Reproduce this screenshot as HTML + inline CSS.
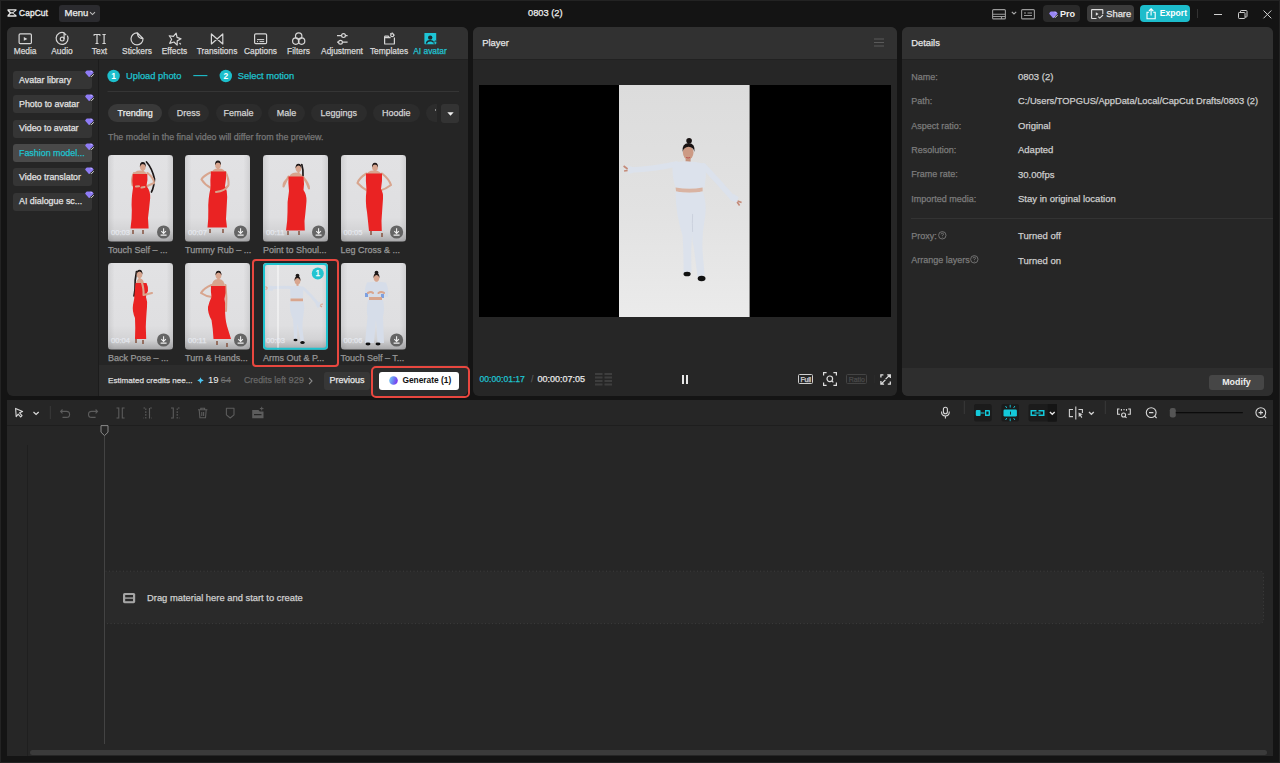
<!DOCTYPE html>
<html><head><meta charset="utf-8">
<style>
*{box-sizing:border-box;margin:0;padding:0}
html,body{width:1280px;height:763px;overflow:hidden;background:#141414;font-family:"Liberation Sans",sans-serif;color:#ddd}
.a{position:absolute}
.t{position:absolute;white-space:nowrap;line-height:1;-webkit-text-stroke:0.25px currentColor}
svg{position:absolute;overflow:visible}
</style></head><body>
<!-- window border -->
<div class="a" style="left:0;top:0;width:1280px;height:1px;background:#232323"></div>
<div class="a" style="left:0;top:0;width:1px;height:763px;background:#232323"></div>
<div class="a" style="left:1279px;top:0;width:1px;height:763px;background:#232323"></div>
<div class="a" style="left:0;top:762px;width:1280px;height:1px;background:#232323"></div>

<!-- ===== TITLE BAR ===== -->
<div id="titlebar">
  <svg style="left:7px;top:9px" width="10" height="8" viewBox="0 0 10 8">
    <path d="M0.5 0.3 H9.5 L9.5 1.6 L6.2 3.9 L9.5 6.3 V7.7 H0.5 V6.2 L2.6 4 L0.5 1.8 Z M2.3 1.6 L3.9 3.3 H5.6 L8 1.6 Z M3.9 4.6 L2.3 6.3 H8 L5.6 4.6 Z" fill="#e8e8e8" fill-rule="evenodd"/>
  </svg>
  <div class="t" style="left:19px;top:8.7px;font-size:8.3px;color:#e8e8e8;letter-spacing:0.15px;-webkit-text-stroke:0.35px currentColor">CapCut</div>
  <div class="a" style="left:59px;top:5px;width:41px;height:17px;background:#2b2b2f;border-radius:3px"></div>
  <div class="t" style="left:64.5px;top:7.8px;font-size:9.5px;color:#eee">Menu</div>
  <svg style="left:89px;top:11px" width="7" height="5" viewBox="0 0 7 5"><path d="M1 1.2 L3.5 3.6 L6 1.2" stroke="#bbb" stroke-width="1.1" fill="none"/></svg>
  <div class="t" style="left:528px;top:8.5px;font-size:9.3px;color:#f0f0f0">0803 (2)</div>

  <!-- layout icons -->
  <svg style="left:992px;top:8.5px" width="14" height="10.5" viewBox="0 0 14 10.5">
    <rect x="0.6" y="0.6" width="12.8" height="9.3" rx="1" stroke="#9a9a9a" stroke-width="1.1" fill="none"/>
    <path d="M0.6 5.2 H13.4 M0.6 7.5 H13.4 M9.5 7.5 V9.9" stroke="#9a9a9a" stroke-width="1.1" fill="none"/>
  </svg>
  <svg style="left:1010.5px;top:10.5px" width="6" height="4" viewBox="0 0 6 4"><path d="M0.8 0.8 L3 3 L5.2 0.8" stroke="#aaa" stroke-width="1.1" fill="none"/></svg>
  <svg style="left:1021px;top:8.5px" width="14" height="10.5" viewBox="0 0 14 10.5">
    <rect x="0.6" y="0.6" width="12.8" height="9.3" rx="1" stroke="#9a9a9a" stroke-width="1.1" fill="none"/>
    <path d="M3 4 H5 M6.5 4 H11 M3 6.5 H11" stroke="#9a9a9a" stroke-width="1.1" fill="none"/>
  </svg>
  <!-- Pro -->
  <div class="a" style="left:1042.5px;top:5px;width:37.5px;height:17px;background:#2a2a2a;border-radius:4px"></div>
  <svg style="left:1049.2px;top:10.5px" width="9" height="7.5" viewBox="0 0 9 7.5">
    <path d="M2 0.4 H6.6 Q7.2 0.4 7.6 0.9 L8.5 2.2 Q8.8 2.7 8.4 3.1 L4.8 6.9 Q4.3 7.3 3.9 6.9 L0.4 3.1 Q0 2.7 0.3 2.2 L1.1 0.9 Q1.5 0.4 2 0.4 Z" fill="#9a87f6"/>
    <path d="M5.6 1.2 Q6.6 1.3 7 2" stroke="#cfc6ff" stroke-width="0.8" fill="none"/>
    <path d="M5.2 5.4 L6.3 6.5 L8.6 4.2" stroke="#e0e0e0" stroke-width="0.9" fill="none"/>
  </svg>
  <div class="t" style="left:1060px;top:9.6px;font-size:9.1px;font-weight:bold;color:#f2f2f2;-webkit-text-stroke:0">Pro</div>
  <!-- Share -->
  <div class="a" style="left:1086.5px;top:5px;width:47px;height:17px;background:#3b3b3b;border-radius:4px"></div>
  <svg style="left:1091px;top:8.5px" width="13" height="10.5" viewBox="0 0 13 10.5">
    <path d="M11.8 5 V1 Q11.8 0.6 11.4 0.6 H1 Q0.6 0.6 0.6 1 V9 Q0.6 9.5 1 9.5 H5.5" stroke="#e0e0e0" stroke-width="1.1" fill="none"/>
    <path d="M4.8 3.2 L7.6 5 L4.8 6.8 Z" fill="#e0e0e0"/>
    <path d="M7.3 7.6 L8.8 9.1 L12 6" stroke="#e0e0e0" stroke-width="1.1" fill="none"/>
  </svg>
  <div class="t" style="left:1106.2px;top:8.6px;font-size:9.4px;color:#e8e8e8">Share</div>
  <!-- Export -->
  <div class="a" style="left:1140px;top:5.3px;width:50px;height:16.7px;background:#1cbccb;border-radius:4px"></div>
  <svg style="left:1145.5px;top:7.8px" width="10" height="11.5" viewBox="0 0 10 11.5">
    <path d="M3 4.2 H1 V10.8 H9.2 V4.2 H7.2" stroke="#fff" stroke-width="1.1" fill="none"/>
    <path d="M5.1 7.5 V0.8 M2.9 3 L5.1 0.8 L7.3 3" stroke="#fff" stroke-width="1.1" fill="none"/>
  </svg>
  <div class="t" style="left:1159.8px;top:8.9px;font-size:8.6px;font-weight:bold;color:#fff;-webkit-text-stroke:0">Export</div>
  <div class="a" style="left:1196.5px;top:9px;width:1px;height:9px;background:#333"></div>
  <!-- window controls -->
  <div class="a" style="left:1214px;top:13.5px;width:8px;height:1px;background:#d0d0d0"></div>
  <svg style="left:1238px;top:9.5px" width="10" height="9" viewBox="0 0 10 9">
    <rect x="0.5" y="2.5" width="6.5" height="6" rx="0.8" stroke="#d0d0d0" stroke-width="1" fill="none"/>
    <path d="M2.5 2.5 V1.2 Q2.5 0.5 3.2 0.5 H8.3 Q9 0.5 9 1.2 V6.3 Q9 7 8.3 7 H7" stroke="#d0d0d0" stroke-width="1" fill="none"/>
  </svg>
  <svg style="left:1263px;top:9.8px" width="9" height="9" viewBox="0 0 9 9"><path d="M0.5 0.5 L8.3 8.3 M8.3 0.5 L0.5 8.3" stroke="#d0d0d0" stroke-width="1" fill="none"/></svg>
</div>

<!-- ===== LEFT PANEL ===== -->
<div class="a" id="lp" style="left:7px;top:27px;width:461px;height:369px;background:#252525;border-radius:6px;overflow:hidden">
  <div class="a" style="left:0;top:0;width:461px;height:32px;background:#313131"></div>
  <div class="a" style="left:0;top:32px;width:461px;height:1px;background:#212121"></div>
  <div class="a" style="left:91px;top:32px;width:1px;height:337px;background:#1c1c1c"></div>
  <div class="a" style="left:92px;top:338.4px;width:369px;height:31px;background:#2c2c2c"></div>
</div>


<!-- ===== LEFT PANEL TABS ===== -->
<svg style="left:0;top:0" width="470" height="60" viewBox="0 0 470 60">
 <g stroke="#d6d6d6" stroke-width="1.2" fill="none">
  <!-- media -->
  <rect x="19.1" y="33.9" width="12.3" height="9.8" rx="1.2"/>
  <path d="M23.8 37 L27.4 38.9 L23.8 40.8 Z" fill="#d6d6d6" stroke="none"/>
  <!-- audio -->
  <path d="M64.4 32.9 A6 6 0 1 0 67.4 35.6"/>
  <circle cx="62.2" cy="39.1" r="1.9"/>
  <path d="M64.1 39 V33.3 Q65.6 34 66.2 35.3"/>
  <!-- stickers -->
  <path d="M137.4 32.9 A6 6 0 1 0 143 38.6 Z M137.4 33 Q137.6 38.4 143 38.6"/>
  <!-- effects -->
  <path d="M174.7 33 L176.6 36.9 L180.8 37.3 L177.6 40.2 L178.6 44.3 L174.7 42.1 L170.9 44.4 L171.8 40 L168.6 37.2 L172.8 36.7 Z" stroke-linejoin="round" transform="rotate(14 174.7 39)"/>
  <path d="M179.5 43 L180.8 44.4"/>
  <!-- transitions -->
  <path d="M211.4 34 V44 L222.8 34 V44 Z" stroke-linejoin="round"/>
  <!-- captions -->
  <rect x="254.6" y="33.8" width="12" height="9.8" rx="1.2"/>
  <path d="M257 39.6 H264.2 M257 41.6 H258 M259.5 41.6 H264.2" stroke-width="1"/>
  <!-- filters -->
  <circle cx="298.7" cy="36.1" r="3.2"/>
  <circle cx="295.8" cy="41.1" r="3.2"/>
  <circle cx="301.6" cy="41.1" r="3.2"/>
  <!-- adjustment -->
  <path d="M337 35.6 H341.6 M345.4 35.6 H347.6 M337 42.2 H338.6 M342.4 42.2 H347.6"/>
  <circle cx="343.5" cy="35.6" r="1.9"/>
  <circle cx="340.5" cy="42.2" r="1.9"/>
  <!-- templates -->
  <path d="M384.6 36.2 V43.4 Q384.6 44 385.2 44 H393.8 Q394.4 44 394.4 43.4 V37.6 M384.6 36.2 H388.2 L389.4 37.6 H390.6 M384.6 37.6 H390.4"/>
  <circle cx="392.2" cy="35.2" r="1.5"/>
  <path d="M392.2 32.6 V33.4 M394.6 35.2 H393.9 M390.3 33.5 L390.9 34"/>
 </g>
 <!-- text TI -->
 <g fill="#d6d6d6">
  <path d="M93.6 34 H100.4 V36.1 H99.6 L99.4 35.1 H97.6 V43.1 L98.6 43.3 V44 H95.4 V43.3 L96.4 43.1 V35.1 H94.6 L94.4 36.1 H93.6 Z"/>
  <path d="M102.3 34 H105.9 V34.7 L104.7 34.9 V43.1 L105.9 43.3 V44 H102.3 V43.3 L103.5 43.1 V34.9 L102.3 34.7 Z"/>
 </g>
 <!-- ai avatar -->
 <rect x="424.4" y="33" width="11.8" height="11.2" rx="0.6" fill="#1ec5d6"/>
 <circle cx="430.2" cy="37.6" r="2.2" fill="#1b2b2e"/>
 <path d="M426.4 43.6 Q426.8 40.8 430.2 40.8 Q432.6 40.8 433.4 42" fill="none" stroke="#1b2b2e" stroke-width="1.4"/>
 <path d="M435.4 40.6 Q435.8 42.5 437.6 42.9 Q435.8 43.3 435.4 45.2 Q435 43.3 433.2 42.9 Q435 42.5 435.4 40.6 Z" fill="#1ec5d6" stroke="#2e2e2e" stroke-width="0.7"/>
</svg>
<div class="t" style="left:-4.899999999999999px;top:47px;width:60px;text-align:center;font-size:8.4px;color:#d8d8d8">Media</div>
<div class="t" style="left:32px;top:47px;width:60px;text-align:center;font-size:8.4px;color:#d8d8d8">Audio</div>
<div class="t" style="left:69.5px;top:47px;width:60px;text-align:center;font-size:8.4px;color:#d8d8d8">Text</div>
<div class="t" style="left:107px;top:47px;width:60px;text-align:center;font-size:8.4px;color:#d8d8d8">Stickers</div>
<div class="t" style="left:144.5px;top:47px;width:60px;text-align:center;font-size:8.4px;color:#d8d8d8">Effects</div>
<div class="t" style="left:187px;top:47px;width:60px;text-align:center;font-size:8.4px;color:#d8d8d8">Transitions</div>
<div class="t" style="left:230.5px;top:47px;width:60px;text-align:center;font-size:8.4px;color:#d8d8d8">Captions</div>
<div class="t" style="left:268.5px;top:47px;width:60px;text-align:center;font-size:8.4px;color:#d8d8d8">Filters</div>
<div class="t" style="left:312px;top:47px;width:60px;text-align:center;font-size:8.4px;color:#d8d8d8">Adjustment</div>
<div class="t" style="left:359px;top:47px;width:60px;text-align:center;font-size:8.4px;color:#d8d8d8">Templates</div>
<div class="t" style="left:400px;top:47px;width:60px;text-align:center;font-size:8.4px;color:#22c3d2">AI avatar</div>


<!-- ===== LEFT PANEL BODY ===== -->
<div class="a" style="left:13px;top:71.0px;width:79px;height:18px;background:#353535;border-radius:3px"></div>
<div class="t" style="left:19px;top:75.6px;font-size:8.9px;color:#e2e2e2">Avatar library</div>
<svg style="left:85px;top:69.8px" width="10" height="8" viewBox="0 0 10 8"><path d="M2 0.4 H6.6 Q7.2 0.4 7.6 0.9 L8.5 2.2 Q8.8 2.7 8.4 3.1 L4.8 6.9 Q4.3 7.3 3.9 6.9 L0.4 3.1 Q0 2.7 0.3 2.2 L1.1 0.9 Q1.5 0.4 2 0.4 Z" fill="#8f7cf6"/><path d="M5.6 1.2 Q6.6 1.3 7 2" stroke="#d4ccff" stroke-width="0.9" fill="none"/><path d="M5.3 5.6 L6.4 6.7 L8.8 4.3" stroke="#2a2a2a" stroke-width="2" fill="none"/><path d="M5.3 5.6 L6.4 6.7 L8.8 4.3" stroke="#e6e6e6" stroke-width="0.9" fill="none"/></svg>
<div class="a" style="left:13px;top:95.3px;width:79px;height:18px;background:#353535;border-radius:3px"></div>
<div class="t" style="left:19px;top:99.9px;font-size:8.9px;color:#e2e2e2">Photo to avatar</div>
<svg style="left:85px;top:94.1px" width="10" height="8" viewBox="0 0 10 8"><path d="M2 0.4 H6.6 Q7.2 0.4 7.6 0.9 L8.5 2.2 Q8.8 2.7 8.4 3.1 L4.8 6.9 Q4.3 7.3 3.9 6.9 L0.4 3.1 Q0 2.7 0.3 2.2 L1.1 0.9 Q1.5 0.4 2 0.4 Z" fill="#8f7cf6"/><path d="M5.6 1.2 Q6.6 1.3 7 2" stroke="#d4ccff" stroke-width="0.9" fill="none"/><path d="M5.3 5.6 L6.4 6.7 L8.8 4.3" stroke="#2a2a2a" stroke-width="2" fill="none"/><path d="M5.3 5.6 L6.4 6.7 L8.8 4.3" stroke="#e6e6e6" stroke-width="0.9" fill="none"/></svg>
<div class="a" style="left:13px;top:119.6px;width:79px;height:18px;background:#353535;border-radius:3px"></div>
<div class="t" style="left:19px;top:124.2px;font-size:8.9px;color:#e2e2e2">Video to avatar</div>
<svg style="left:85px;top:118.4px" width="10" height="8" viewBox="0 0 10 8"><path d="M2 0.4 H6.6 Q7.2 0.4 7.6 0.9 L8.5 2.2 Q8.8 2.7 8.4 3.1 L4.8 6.9 Q4.3 7.3 3.9 6.9 L0.4 3.1 Q0 2.7 0.3 2.2 L1.1 0.9 Q1.5 0.4 2 0.4 Z" fill="#8f7cf6"/><path d="M5.6 1.2 Q6.6 1.3 7 2" stroke="#d4ccff" stroke-width="0.9" fill="none"/><path d="M5.3 5.6 L6.4 6.7 L8.8 4.3" stroke="#2a2a2a" stroke-width="2" fill="none"/><path d="M5.3 5.6 L6.4 6.7 L8.8 4.3" stroke="#e6e6e6" stroke-width="0.9" fill="none"/></svg>
<div class="a" style="left:13px;top:143.9px;width:79px;height:18px;background:#494949;border-radius:3px"></div>
<div class="t" style="left:19px;top:148.5px;font-size:8.9px;color:#1ec3cf">Fashion model...</div>
<svg style="left:85px;top:142.7px" width="10" height="8" viewBox="0 0 10 8"><path d="M2 0.4 H6.6 Q7.2 0.4 7.6 0.9 L8.5 2.2 Q8.8 2.7 8.4 3.1 L4.8 6.9 Q4.3 7.3 3.9 6.9 L0.4 3.1 Q0 2.7 0.3 2.2 L1.1 0.9 Q1.5 0.4 2 0.4 Z" fill="#8f7cf6"/><path d="M5.6 1.2 Q6.6 1.3 7 2" stroke="#d4ccff" stroke-width="0.9" fill="none"/><path d="M5.3 5.6 L6.4 6.7 L8.8 4.3" stroke="#2a2a2a" stroke-width="2" fill="none"/><path d="M5.3 5.6 L6.4 6.7 L8.8 4.3" stroke="#e6e6e6" stroke-width="0.9" fill="none"/></svg>
<div class="a" style="left:13px;top:168.2px;width:79px;height:18px;background:#353535;border-radius:3px"></div>
<div class="t" style="left:19px;top:172.8px;font-size:8.9px;color:#e2e2e2">Video translator</div>
<svg style="left:85px;top:167.0px" width="10" height="8" viewBox="0 0 10 8"><path d="M2 0.4 H6.6 Q7.2 0.4 7.6 0.9 L8.5 2.2 Q8.8 2.7 8.4 3.1 L4.8 6.9 Q4.3 7.3 3.9 6.9 L0.4 3.1 Q0 2.7 0.3 2.2 L1.1 0.9 Q1.5 0.4 2 0.4 Z" fill="#8f7cf6"/><path d="M5.6 1.2 Q6.6 1.3 7 2" stroke="#d4ccff" stroke-width="0.9" fill="none"/><path d="M5.3 5.6 L6.4 6.7 L8.8 4.3" stroke="#2a2a2a" stroke-width="2" fill="none"/><path d="M5.3 5.6 L6.4 6.7 L8.8 4.3" stroke="#e6e6e6" stroke-width="0.9" fill="none"/></svg>
<div class="a" style="left:13px;top:192.5px;width:79px;height:18px;background:#353535;border-radius:3px"></div>
<div class="t" style="left:19px;top:197.1px;font-size:8.9px;color:#e2e2e2">AI dialogue sc...</div>
<svg style="left:85px;top:191.3px" width="10" height="8" viewBox="0 0 10 8"><path d="M2 0.4 H6.6 Q7.2 0.4 7.6 0.9 L8.5 2.2 Q8.8 2.7 8.4 3.1 L4.8 6.9 Q4.3 7.3 3.9 6.9 L0.4 3.1 Q0 2.7 0.3 2.2 L1.1 0.9 Q1.5 0.4 2 0.4 Z" fill="#8f7cf6"/><path d="M5.6 1.2 Q6.6 1.3 7 2" stroke="#d4ccff" stroke-width="0.9" fill="none"/><path d="M5.3 5.6 L6.4 6.7 L8.8 4.3" stroke="#2a2a2a" stroke-width="2" fill="none"/><path d="M5.3 5.6 L6.4 6.7 L8.8 4.3" stroke="#e6e6e6" stroke-width="0.9" fill="none"/></svg>

<svg style="left:0;top:0" width="470" height="100" viewBox="0 0 470 100">
 <circle cx="113.6" cy="76" r="6.2" fill="#1dbfcc"/>
 <circle cx="225.8" cy="76" r="6.2" fill="#1dbfcc"/>
 <path d="M193.3 75.6 H207.4" stroke="#1dbfcc" stroke-width="1.1"/>
 <path d="M107.5 91.5 H459" stroke="#353535" stroke-width="1"/>
</svg>
<div class="t" style="left:109.6px;top:71.8px;width:8px;text-align:center;font-size:8.5px;font-weight:bold;color:#fff;-webkit-text-stroke:0">1</div>
<div class="t" style="left:221.8px;top:71.8px;width:8px;text-align:center;font-size:8.5px;font-weight:bold;color:#fff;-webkit-text-stroke:0">2</div>
<div class="t" style="left:126px;top:71.5px;font-size:9.3px;color:#1ec3cf">Upload photo</div>
<div class="t" style="left:237.8px;top:71.5px;font-size:9.3px;color:#1ec3cf">Select motion</div>
<div class="a" style="left:108.2px;top:104.2px;width:54px;height:18.3px;background:#393939;border-radius:9px"></div>
<div class="t" style="left:108.2px;top:108.8px;width:54px;text-align:center;font-size:9px;color:#ececec">Trending</div>
<div class="a" style="left:168px;top:104.2px;width:41px;height:18.3px;background:#2c2c2c;border-radius:9px"></div>
<div class="t" style="left:168px;top:108.8px;width:41px;text-align:center;font-size:9px;color:#d4d4d4">Dress</div>
<div class="a" style="left:215.5px;top:104.2px;width:46px;height:18.3px;background:#2c2c2c;border-radius:9px"></div>
<div class="t" style="left:215.5px;top:108.8px;width:46px;text-align:center;font-size:9px;color:#d4d4d4">Female</div>
<div class="a" style="left:268px;top:104.2px;width:37px;height:18.3px;background:#2c2c2c;border-radius:9px"></div>
<div class="t" style="left:268px;top:108.8px;width:37px;text-align:center;font-size:9px;color:#d4d4d4">Male</div>
<div class="a" style="left:311px;top:104.2px;width:55.5px;height:18.3px;background:#2c2c2c;border-radius:9px"></div>
<div class="t" style="left:311px;top:108.8px;width:55.5px;text-align:center;font-size:9px;color:#d4d4d4">Leggings</div>
<div class="a" style="left:372.8px;top:104.2px;width:47px;height:18.3px;background:#2c2c2c;border-radius:9px"></div>
<div class="t" style="left:372.8px;top:108.8px;width:47px;text-align:center;font-size:9px;color:#d4d4d4">Hoodie</div>
<div class="a" style="left:426px;top:104.2px;width:11px;height:18.3px;background:#2c2c2c;border-radius:9px 0 0 9px"></div>
<div class="a" style="left:434.5px;top:109px;width:1px;height:2px;background:#888"></div>
<div class="a" style="left:440.8px;top:104px;width:18.4px;height:18.5px;background:#333;border-radius:3px"></div>
<svg style="left:446.5px;top:111.5px" width="7" height="4" viewBox="0 0 7 4"><path d="M0.3 0.3 H6.7 L3.5 3.7 Z" fill="#f0f0f0"/></svg>
<div class="t" style="left:108px;top:132.5px;font-size:8.9px;color:#777">The model in the final video will differ from the preview.</div>

<!--THUMBS-->
<svg style="left:108px;top:155.3px" width="65" height="86.7" viewBox="0 0 65 86.7"><defs><linearGradient id="g0" x1="0" y1="0" x2="0" y2="1">
<stop offset="0" stop-color="#e2e2e4"/><stop offset="0.72" stop-color="#dfdfe1"/><stop offset="0.88" stop-color="#d3d3d5"/><stop offset="1" stop-color="#a8a8aa"/></linearGradient>
<linearGradient id="g0h" x1="0" y1="0" x2="1" y2="0"><stop offset="0" stop-color="#000" stop-opacity="0.08"/><stop offset="0.1" stop-color="#000" stop-opacity="0"/><stop offset="0.9" stop-color="#000" stop-opacity="0"/><stop offset="1" stop-color="#000" stop-opacity="0.08"/></linearGradient>
<clipPath id="g0c"><rect x="0" y="0" width="65" height="86.7" rx="3.5"/></clipPath></defs><g clip-path="url(#g0c)"><rect width="65" height="86.7" fill="url(#g0)"/><rect width="65" height="86.7" fill="url(#g0h)"/><path d="M38.5 7 Q44 13 46.5 24 Q46 32 43.5 37" stroke="#1d1818" stroke-width="1.7" fill="none" stroke-linecap="round"/><rect x="33.8" y="13.9" width="2" height="3.5" fill="#d8a58e"/><ellipse cx="34.8" cy="11.4" rx="2.9" ry="3.9" fill="#d8a58e"/><path d="M31.9 11.9 Q31.599999999999998 7.1000000000000005 34.8 7.1000000000000005 Q38.0 7.1000000000000005 37.699999999999996 11.9 Q37.099999999999994 9.2 34.8 9.0 Q32.5 9.2 31.9 11.9 Z" fill="#1d1818"/><path d="M26 18 Q23 24 24.5 30 L28 31.5" stroke="#d8a58e" stroke-width="2.1" fill="none" stroke-linecap="round" stroke-linejoin="round"/><path d="M39.5 18 Q46 23 46 28 L37 32" stroke="#d8a58e" stroke-width="2.1" fill="none" stroke-linecap="round" stroke-linejoin="round"/><path d="M25 75 L25 79 M35 75 L35 79" stroke="#8a5a48" stroke-width="1.6"/><path d="M25.5 21 Q25.5 15.5 32.25 15.5 Q39 15.5 39 21 Z" fill="#d8a58e"/><path d="M24.8 19 H39.3 Q40 25 38.5 31 Q42.5 36 42.2 43 Q41 55 40 63 L40.6 73.5 H22.5 Q24 63 23.8 55 Q23 45 25 33 Q23.8 26 24.8 19 Z" fill="#ea2323"/><path d="M28 31.5 L31 31.3" stroke="#d8a58e" stroke-width="2.1" fill="none" stroke-linecap="round" stroke-linejoin="round"/><path d="M36.5 32 L33.5 32.5" stroke="#d8a58e" stroke-width="2.1" fill="none" stroke-linecap="round" stroke-linejoin="round"/><circle cx="55.6" cy="77" r="6.6" fill="#5b5b5b" fill-opacity="0.92"/><path d="M55.6 73.2 V78.4 M53.3 76.2 L55.6 78.5 L57.9 76.2 M52.6 80.1 H58.6" stroke="#f0f0f0" stroke-width="1.1" fill="none"/></g></svg>
<div class="t" style="left:111px;top:228.8px;font-size:7.6px;color:#eef2fa;opacity:0.7">00:03</div>
<div class="t" style="left:108px;top:246.3px;font-size:9px;color:#969696">Touch Self – ...</div>
<svg style="left:185px;top:155.3px" width="65" height="86.7" viewBox="0 0 65 86.7"><defs><linearGradient id="g1" x1="0" y1="0" x2="0" y2="1">
<stop offset="0" stop-color="#e2e2e4"/><stop offset="0.72" stop-color="#dfdfe1"/><stop offset="0.88" stop-color="#d3d3d5"/><stop offset="1" stop-color="#a8a8aa"/></linearGradient>
<linearGradient id="g1h" x1="0" y1="0" x2="1" y2="0"><stop offset="0" stop-color="#000" stop-opacity="0.08"/><stop offset="0.1" stop-color="#000" stop-opacity="0"/><stop offset="0.9" stop-color="#000" stop-opacity="0"/><stop offset="1" stop-color="#000" stop-opacity="0.08"/></linearGradient>
<clipPath id="g1c"><rect x="0" y="0" width="65" height="86.7" rx="3.5"/></clipPath></defs><g clip-path="url(#g1c)"><rect width="65" height="86.7" fill="url(#g1)"/><rect width="65" height="86.7" fill="url(#g1h)"/><rect x="32" y="12.3" width="2" height="3.5" fill="#d8a58e"/><ellipse cx="33" cy="9.8" rx="2.9" ry="3.9" fill="#d8a58e"/><path d="M30.1 10.3 Q29.8 5.500000000000001 33 5.500000000000001 Q36.2 5.500000000000001 35.9 10.3 Q35.3 7.6000000000000005 33 7.4 Q30.7 7.6000000000000005 30.1 10.3 Z" fill="#1d1818"/><path d="M26.5 17 Q18 21 16.5 24.5 Q20 30 26 33" stroke="#d8a58e" stroke-width="2.1" fill="none" stroke-linecap="round" stroke-linejoin="round"/><path d="M40.5 17 Q44 24 43.5 30 Q40 36 31 37" stroke="#d8a58e" stroke-width="2.1" fill="none" stroke-linecap="round" stroke-linejoin="round"/><path d="M25 74 L25 78 M38 74 L38 78" stroke="#8a5a48" stroke-width="1.6"/><path d="M26.5 19 Q26.5 13.5 33.5 13.5 Q40.5 13.5 40.5 19 Z" fill="#d8a58e"/><path d="M26 16.5 H41 Q41.5 24 40 31 Q42.5 36 42.2 42 Q41.5 56 41 64 L42 72.5 H22.5 Q23.5 64 23.3 55 Q22.8 45 25.5 33 Q25 25 26 16.5 Z" fill="#ea2323"/><path d="M43 31 Q40 36 31 37" stroke="#d8a58e" stroke-width="2.0" fill="none" stroke-linecap="round" stroke-linejoin="round"/><circle cx="55.6" cy="77" r="6.6" fill="#5b5b5b" fill-opacity="0.92"/><path d="M55.6 73.2 V78.4 M53.3 76.2 L55.6 78.5 L57.9 76.2 M52.6 80.1 H58.6" stroke="#f0f0f0" stroke-width="1.1" fill="none"/></g></svg>
<div class="t" style="left:188px;top:228.8px;font-size:7.6px;color:#eef2fa;opacity:0.7">00:07</div>
<div class="t" style="left:185px;top:246.3px;font-size:9px;color:#969696">Tummy Rub – ...</div>
<svg style="left:263px;top:155.3px" width="65" height="86.7" viewBox="0 0 65 86.7"><defs><linearGradient id="g2" x1="0" y1="0" x2="0" y2="1">
<stop offset="0" stop-color="#e2e2e4"/><stop offset="0.72" stop-color="#dfdfe1"/><stop offset="0.88" stop-color="#d3d3d5"/><stop offset="1" stop-color="#a8a8aa"/></linearGradient>
<linearGradient id="g2h" x1="0" y1="0" x2="1" y2="0"><stop offset="0" stop-color="#000" stop-opacity="0.08"/><stop offset="0.1" stop-color="#000" stop-opacity="0"/><stop offset="0.9" stop-color="#000" stop-opacity="0"/><stop offset="1" stop-color="#000" stop-opacity="0.08"/></linearGradient>
<clipPath id="g2c"><rect x="0" y="0" width="65" height="86.7" rx="3.5"/></clipPath></defs><g clip-path="url(#g2c)"><rect width="65" height="86.7" fill="url(#g2)"/><rect width="65" height="86.7" fill="url(#g2h)"/><path d="M38.8 9.5 Q40.5 15 40 21" stroke="#1d1818" stroke-width="1.7" fill="none" stroke-linecap="round"/><rect x="34.5" y="15.5" width="2" height="3.5" fill="#d8a58e"/><ellipse cx="35.5" cy="13" rx="2.9" ry="3.9" fill="#d8a58e"/><path d="M32.6 13.5 Q32.3 8.7 35.5 8.7 Q38.7 8.7 38.4 13.5 Q37.8 10.8 35.5 10.6 Q33.2 10.8 32.6 13.5 Z" fill="#1d1818"/><path d="M26.5 22 Q20 27 20.5 31.5 Q23 26 25.5 21.5" stroke="#d8a58e" stroke-width="2.1" fill="none" stroke-linecap="round" stroke-linejoin="round"/><path d="M40 22 Q46 29 46 33.5 Q44 27 40.5 22.5" stroke="#d8a58e" stroke-width="2.1" fill="none" stroke-linecap="round" stroke-linejoin="round"/><path d="M25 76 L25 80 M36 76 L36 80" stroke="#8a5a48" stroke-width="1.6"/><path d="M26 24 Q26 17.5 33.0 17.5 Q40 17.5 40 24 Z" fill="#d8a58e"/><path d="M25.5 21.5 H40.5 Q41.5 29 40.5 35 Q43.8 40 43.5 46 Q42.5 58 41.5 66 L41.8 75.5 H23 Q24.5 66 24.5 57 Q24 47 26 36 Q25 28 25.5 21.5 Z" fill="#ea2323"/><circle cx="55.6" cy="77" r="6.6" fill="#5b5b5b" fill-opacity="0.92"/><path d="M55.6 73.2 V78.4 M53.3 76.2 L55.6 78.5 L57.9 76.2 M52.6 80.1 H58.6" stroke="#f0f0f0" stroke-width="1.1" fill="none"/></g></svg>
<div class="t" style="left:266px;top:228.8px;font-size:7.6px;color:#eef2fa;opacity:0.7">00:11</div>
<div class="t" style="left:263px;top:246.3px;font-size:9px;color:#969696">Point to Shoul...</div>
<svg style="left:340.5px;top:155.3px" width="65" height="86.7" viewBox="0 0 65 86.7"><defs><linearGradient id="g3" x1="0" y1="0" x2="0" y2="1">
<stop offset="0" stop-color="#e2e2e4"/><stop offset="0.72" stop-color="#dfdfe1"/><stop offset="0.88" stop-color="#d3d3d5"/><stop offset="1" stop-color="#a8a8aa"/></linearGradient>
<linearGradient id="g3h" x1="0" y1="0" x2="1" y2="0"><stop offset="0" stop-color="#000" stop-opacity="0.08"/><stop offset="0.1" stop-color="#000" stop-opacity="0"/><stop offset="0.9" stop-color="#000" stop-opacity="0"/><stop offset="1" stop-color="#000" stop-opacity="0.08"/></linearGradient>
<clipPath id="g3c"><rect x="0" y="0" width="65" height="86.7" rx="3.5"/></clipPath></defs><g clip-path="url(#g3c)"><rect width="65" height="86.7" fill="url(#g3)"/><rect width="65" height="86.7" fill="url(#g3h)"/><rect x="33" y="14.5" width="2" height="3.5" fill="#d8a58e"/><ellipse cx="34" cy="12" rx="2.9" ry="3.9" fill="#d8a58e"/><path d="M31.1 12.5 Q30.8 7.7 34 7.7 Q37.2 7.7 36.9 12.5 Q36.3 9.8 34 9.6 Q31.7 9.8 31.1 12.5 Z" fill="#1d1818"/><path d="M25.5 18.5 Q18 23 16.5 28 Q21 33 27 36" stroke="#d8a58e" stroke-width="2.1" fill="none" stroke-linecap="round" stroke-linejoin="round"/><path d="M41 18.5 Q48 24 50 30 Q45 34 38 36" stroke="#d8a58e" stroke-width="2.1" fill="none" stroke-linecap="round" stroke-linejoin="round"/><path d="M30 76 L30 80 M41 78 L41 82" stroke="#8a5a48" stroke-width="1.6"/><path d="M25.5 21 Q25.5 15.5 33.0 15.5 Q40.5 15.5 40.5 21 Z" fill="#d8a58e"/><path d="M25 18.5 H41 Q41.5 26 40 34 Q42.5 38 42 44 Q41 58 40.5 66 L40.8 76 H28 Q27 66 26 57 Q24 47 25.5 35 Q24.5 26 25 18.5 Z" fill="#ea2323"/><circle cx="55.6" cy="77" r="6.6" fill="#5b5b5b" fill-opacity="0.92"/><path d="M55.6 73.2 V78.4 M53.3 76.2 L55.6 78.5 L57.9 76.2 M52.6 80.1 H58.6" stroke="#f0f0f0" stroke-width="1.1" fill="none"/></g></svg>
<div class="t" style="left:343.5px;top:228.8px;font-size:7.6px;color:#eef2fa;opacity:0.7">00:05</div>
<div class="t" style="left:340.5px;top:246.3px;font-size:9px;color:#969696">Leg Cross &amp; ...</div>
<svg style="left:108px;top:263.3px" width="65" height="86.7" viewBox="0 0 65 86.7"><defs><linearGradient id="g4" x1="0" y1="0" x2="0" y2="1">
<stop offset="0" stop-color="#e2e2e4"/><stop offset="0.72" stop-color="#dfdfe1"/><stop offset="0.88" stop-color="#d3d3d5"/><stop offset="1" stop-color="#a8a8aa"/></linearGradient>
<linearGradient id="g4h" x1="0" y1="0" x2="1" y2="0"><stop offset="0" stop-color="#000" stop-opacity="0.08"/><stop offset="0.1" stop-color="#000" stop-opacity="0"/><stop offset="0.9" stop-color="#000" stop-opacity="0"/><stop offset="1" stop-color="#000" stop-opacity="0.08"/></linearGradient>
<clipPath id="g4c"><rect x="0" y="0" width="65" height="86.7" rx="3.5"/></clipPath></defs><g clip-path="url(#g4c)"><rect width="65" height="86.7" fill="url(#g4)"/><rect width="65" height="86.7" fill="url(#g4h)"/><path d="M28.5 8.5 Q26.5 18 27 26 Q26.5 30 26 33" stroke="#1d1818" stroke-width="1.7" fill="none" stroke-linecap="round"/><rect x="30.5" y="13.5" width="2" height="3.5" fill="#d8a58e"/><ellipse cx="31.5" cy="11" rx="2.9" ry="3.9" fill="#d8a58e"/><path d="M28.6 11.5 Q28.3 6.7 31.5 6.7 Q34.7 6.7 34.4 11.5 Q33.8 8.8 31.5 8.6 Q29.2 8.8 28.6 11.5 Z" fill="#1d1818"/><path d="M28 76 L28 80 M35 77 L35 81" stroke="#8a5a48" stroke-width="1.6"/><path d="M28 22 Q28 15.5 32.0 15.5 Q36 15.5 36 22 Z" fill="#d8a58e"/><path d="M27.5 20 H38.5 Q40.5 24 40 28 Q38 31 38 34 Q39.5 38 39 44 Q38 56 37.8 64 L38.2 76 H27 Q27.5 64 27 55 Q24 48 25 42 Q26.5 36 26.5 31 Q27 25 27.5 20 Z" fill="#ea2323"/><path d="M33.5 18 Q36 26 35.5 32 Q40 31 44 30" stroke="#d8a58e" stroke-width="2.1" fill="none" stroke-linecap="round" stroke-linejoin="round"/><circle cx="55.6" cy="77" r="6.6" fill="#5b5b5b" fill-opacity="0.92"/><path d="M55.6 73.2 V78.4 M53.3 76.2 L55.6 78.5 L57.9 76.2 M52.6 80.1 H58.6" stroke="#f0f0f0" stroke-width="1.1" fill="none"/></g></svg>
<div class="t" style="left:111px;top:336.8px;font-size:7.6px;color:#eef2fa;opacity:0.7">00:04</div>
<div class="t" style="left:108px;top:354.3px;font-size:9px;color:#969696">Back Pose – ...</div>
<svg style="left:185px;top:263.3px" width="65" height="86.7" viewBox="0 0 65 86.7"><defs><linearGradient id="g5" x1="0" y1="0" x2="0" y2="1">
<stop offset="0" stop-color="#e2e2e4"/><stop offset="0.72" stop-color="#dfdfe1"/><stop offset="0.88" stop-color="#d3d3d5"/><stop offset="1" stop-color="#a8a8aa"/></linearGradient>
<linearGradient id="g5h" x1="0" y1="0" x2="1" y2="0"><stop offset="0" stop-color="#000" stop-opacity="0.08"/><stop offset="0.1" stop-color="#000" stop-opacity="0"/><stop offset="0.9" stop-color="#000" stop-opacity="0"/><stop offset="1" stop-color="#000" stop-opacity="0.08"/></linearGradient>
<clipPath id="g5c"><rect x="0" y="0" width="65" height="86.7" rx="3.5"/></clipPath></defs><g clip-path="url(#g5c)"><rect width="65" height="86.7" fill="url(#g5)"/><rect width="65" height="86.7" fill="url(#g5h)"/><rect x="32.5" y="14.5" width="2" height="3.5" fill="#d8a58e"/><ellipse cx="33.5" cy="12" rx="2.9" ry="3.9" fill="#d8a58e"/><path d="M30.6 12.5 Q30.3 7.7 33.5 7.7 Q36.7 7.7 36.4 12.5 Q35.8 9.8 33.5 9.6 Q31.2 9.8 30.6 12.5 Z" fill="#1d1818"/><path d="M26.5 22 Q19 25 16 30 Q21 33.5 27 34" stroke="#d8a58e" stroke-width="2.1" fill="none" stroke-linecap="round" stroke-linejoin="round"/><path d="M40.5 22 Q42 35 41 48" stroke="#d8a58e" stroke-width="2.1" fill="none" stroke-linecap="round" stroke-linejoin="round"/><path d="M32 78 L32 82 M42 80 L42 84" stroke="#8a5a48" stroke-width="1.6"/><path d="M26.5 25 Q26.5 16 33.25 16 Q40 16 40 25 Z" fill="#d8a58e"/><path d="M26 23 H40.5 Q41 30 39.5 36 Q40.5 40 40 45 Q40 56 42 63 L46 76 H28.5 Q28 66 26.5 57 Q22.5 50 23 44 Q24.5 38 26.5 34 Q25.5 28 26 23 Z" fill="#ea2323"/><circle cx="55.6" cy="77" r="6.6" fill="#5b5b5b" fill-opacity="0.92"/><path d="M55.6 73.2 V78.4 M53.3 76.2 L55.6 78.5 L57.9 76.2 M52.6 80.1 H58.6" stroke="#f0f0f0" stroke-width="1.1" fill="none"/></g></svg>
<div class="t" style="left:188px;top:336.8px;font-size:7.6px;color:#eef2fa;opacity:0.7">00:11</div>
<div class="t" style="left:185px;top:354.3px;font-size:9px;color:#969696">Turn &amp; Hands...</div>
<svg style="left:263px;top:263.3px" width="65" height="86.7" viewBox="0 0 65 86.7"><defs><linearGradient id="g6" x1="0" y1="0" x2="0" y2="1">
<stop offset="0" stop-color="#e2e2e4"/><stop offset="0.72" stop-color="#dfdfe1"/><stop offset="0.88" stop-color="#d3d3d5"/><stop offset="1" stop-color="#a8a8aa"/></linearGradient>
<linearGradient id="g6h" x1="0" y1="0" x2="1" y2="0"><stop offset="0" stop-color="#000" stop-opacity="0.08"/><stop offset="0.1" stop-color="#000" stop-opacity="0"/><stop offset="0.9" stop-color="#000" stop-opacity="0"/><stop offset="1" stop-color="#000" stop-opacity="0.08"/></linearGradient>
<clipPath id="g6c"><rect x="0" y="0" width="65" height="86.7" rx="3.5"/></clipPath></defs><g clip-path="url(#g6c)"><rect width="65" height="86.7" fill="url(#g6)"/><rect width="65" height="86.7" fill="url(#g6h)"/><path d="M28 24.5 Q18 24 6 25" stroke="#d6dde9" stroke-width="3.0" fill="none" stroke-linecap="round" stroke-linejoin="round"/><path d="M5 22.5 L10 23 L10 27.5 L5 28 Z" fill="#d6dde9"/><path d="M40 25 Q49 33 55 41" stroke="#d6dde9" stroke-width="3.0" fill="none" stroke-linecap="round" stroke-linejoin="round"/><path d="M52.5 41.5 L57 38.5 L58 43.5 L54.5 45 Z" fill="#d6dde9"/><path d="M4.5 25 L2.5 23.5 M4.5 25.5 L2.5 26.5" stroke="#d8a58e" stroke-width="1.2"/><path d="M57.5 41.5 L60 41 M57 42.5 L59 44" stroke="#d8a58e" stroke-width="1.2"/><rect x="33.5" y="20.0" width="2" height="3.5" fill="#d8a58e"/><ellipse cx="34.5" cy="17.5" rx="2.9" ry="3.9" fill="#d8a58e"/><path d="M31.6 18.0 Q31.3 13.2 34.5 13.2 Q37.7 13.2 37.4 18.0 Q36.8 15.3 34.5 15.1 Q32.2 15.3 31.6 18.0 Z" fill="#1d1818"/><circle cx="34.5" cy="12.7" r="1.9" fill="#1d1818"/><path d="M27 23.5 Q34 22 40.5 24 L40 35.5 H27.5 Z" fill="#d6dde9"/><path d="M27.5 35.5 H40 V38.5 H27.5 Z" fill="#d8a58e"/><path d="M27 38.5 H40.5 Q42 45 40.5 52 Q39 60 39.5 66 L41 78 H37.5 L34.5 60 L34 76 H31 Q30.5 62 30 56 Q26 48 27 38.5 Z" fill="#d6dde9"/><ellipse cx="32.5" cy="77" rx="2" ry="1.3" fill="#111"/><ellipse cx="39.5" cy="79.5" rx="2.2" ry="1.5" fill="#111"/><path d="M15 0 V86.7" stroke="#ffffff" stroke-opacity="0.8" stroke-width="1.1"/></g><rect x="1" y="1" width="63" height="84.7" rx="3" stroke="#1ec3cf" stroke-width="2" fill="none"/><circle cx="54.8" cy="10.6" r="6" fill="#23c4d0"/></svg>
<div class="t" style="left:312.8px;top:269.90000000000003px;width:10px;text-align:center;font-size:8.2px;color:#fff">1</div>
<div class="t" style="left:266px;top:336.8px;font-size:7.6px;color:#eef2fa;opacity:0.7">00:03</div>
<div class="t" style="left:263px;top:354.3px;font-size:9px;color:#969696">Arms Out &amp; P...</div>
<svg style="left:340.5px;top:263.3px" width="65" height="86.7" viewBox="0 0 65 86.7"><defs><linearGradient id="g7" x1="0" y1="0" x2="0" y2="1">
<stop offset="0" stop-color="#e2e2e4"/><stop offset="0.72" stop-color="#dfdfe1"/><stop offset="0.88" stop-color="#d3d3d5"/><stop offset="1" stop-color="#a8a8aa"/></linearGradient>
<linearGradient id="g7h" x1="0" y1="0" x2="1" y2="0"><stop offset="0" stop-color="#000" stop-opacity="0.08"/><stop offset="0.1" stop-color="#000" stop-opacity="0"/><stop offset="0.9" stop-color="#000" stop-opacity="0"/><stop offset="1" stop-color="#000" stop-opacity="0.08"/></linearGradient>
<clipPath id="g7c"><rect x="0" y="0" width="65" height="86.7" rx="3.5"/></clipPath></defs><g clip-path="url(#g7c)"><rect width="65" height="86.7" fill="url(#g7)"/><rect width="65" height="86.7" fill="url(#g7h)"/><rect x="34.5" y="17.0" width="2" height="3.5" fill="#d8a58e"/><ellipse cx="35.5" cy="14.5" rx="2.9" ry="3.9" fill="#d8a58e"/><path d="M32.6 15.0 Q32.3 10.2 35.5 10.2 Q38.7 10.2 38.4 15.0 Q37.8 12.3 35.5 12.1 Q33.2 12.3 32.6 15.0 Z" fill="#1d1818"/><circle cx="35.5" cy="9.7" r="1.9" fill="#1d1818"/><path d="M26 19.5 Q35 18 45 19.5 Q48 26 47 34 L42 34 L41 26 H30 L29 34 L24 34 Q23 26 26 19.5 Z" fill="#d6dde9"/><path d="M28 26 H42 V34 H28 Z" fill="#d6dde9"/><rect x="24" y="30" width="3" height="4" fill="#7da0e0"/><rect x="40" y="31" width="3" height="4" fill="#7da0e0"/><path d="M27 30 Q30 28 32 30" stroke="#d8a58e" stroke-width="2.1" fill="none" stroke-linecap="round" stroke-linejoin="round"/><path d="M43 30 Q40 28 37.5 30" stroke="#d8a58e" stroke-width="2.1" fill="none" stroke-linecap="round" stroke-linejoin="round"/><path d="M28 34 H41 V37 H28 Z" fill="#d8a58e"/><path d="M27 37 H42 Q44 46 42 54 L43 80 H36.5 L35 56 L33 80 H24 L26.5 54 Q25 46 27 37 Z" fill="#d6dde9"/><ellipse cx="27" cy="81" rx="2.5" ry="1.4" fill="#111"/><ellipse cx="37" cy="81" rx="2.5" ry="1.4" fill="#111"/><circle cx="55.6" cy="77" r="6.6" fill="#5b5b5b" fill-opacity="0.92"/><path d="M55.6 73.2 V78.4 M53.3 76.2 L55.6 78.5 L57.9 76.2 M52.6 80.1 H58.6" stroke="#f0f0f0" stroke-width="1.1" fill="none"/></g></svg>
<div class="t" style="left:343.5px;top:336.8px;font-size:7.6px;color:#eef2fa;opacity:0.7">00:06</div>
<div class="t" style="left:340.5px;top:354.3px;font-size:9px;color:#969696">Touch Self – T...</div>
<!--/THUMBS-->

<!-- selection boxes -->
<div class="a" style="left:252px;top:258.6px;width:87px;height:108.4px;border:2px solid #e8473f;border-radius:4px"></div>
<!-- credits bar -->
<div class="t" style="left:108px;top:376.8px;font-size:8.1px;color:#dcdcdc">Estimated credits nee...</div>
<svg style="left:197px;top:377px" width="7" height="7" viewBox="0 0 9 9"><path d="M4.5 0.3 Q5 3.8 8.7 4.5 Q5 5.2 4.5 8.7 Q4 5.2 0.3 4.5 Q4 3.8 4.5 0.3 Z" fill="#4cc3f0"/></svg>
<div class="t" style="left:208px;top:374.8px;font-size:9.6px;color:#f0f0f0;-webkit-text-stroke:0">19</div>
<div class="t" style="left:220.5px;top:374.8px;font-size:9.6px;color:#707070;-webkit-text-stroke:0">64</div>
<div class="a" style="left:220.5px;top:379.5px;width:10.5px;height:1px;background:#707070"></div>
<div class="t" style="left:244px;top:376.3px;font-size:8.8px;color:#686868">Credits left <span style="font-size:9.3px">929</span></div>
<svg style="left:307.5px;top:376.5px" width="5" height="8" viewBox="0 0 5 8"><path d="M1 0.8 L4 4 L1 7.2" stroke="#8a8a8a" stroke-width="1.1" fill="none"/></svg>
<div class="a" style="left:324px;top:372px;width:46px;height:18px;background:#373737;border-radius:3px"></div>
<div class="t" style="left:324px;top:376.2px;width:46px;text-align:center;font-size:9px;color:#e8e8e8">Previous</div>
<div class="a" style="left:371px;top:365.6px;width:99.3px;height:32px;border:2px solid #e8473f;border-radius:5px"></div>
<div class="a" style="left:379.3px;top:371.5px;width:79.7px;height:18.5px;background:#fff;border-radius:3px"></div>
<svg style="left:388.5px;top:376px" width="9" height="9" viewBox="0 0 9 9"><defs><linearGradient id="gdot" x1="0" y1="0" x2="1" y2="0.3"><stop offset="0" stop-color="#7fd6f2"/><stop offset="0.5" stop-color="#6a8cf2"/><stop offset="1" stop-color="#7a3cf0"/></linearGradient></defs><circle cx="4.5" cy="4.5" r="4.3" fill="url(#gdot)"/></svg>
<div class="t" style="left:402.4px;top:376px;font-size:8.4px;font-weight:bold;color:#111;-webkit-text-stroke:0">Generate (1)</div>

<!-- ===== PLAYER PANEL ===== -->
<div class="a" id="pp" style="left:473px;top:27px;width:424px;height:369px;background:#262626;border-radius:6px;overflow:hidden">
  <div class="a" style="left:0;top:0;width:424px;height:32px;background:#313131"></div>
  <div class="a" style="left:0;top:32px;width:424px;height:1px;background:#212121"></div>
  <div class="t" style="left:9.2px;top:11px;font-size:9.4px;color:#e6e6e6">Player</div>
  <div class="a" style="left:6px;top:58px;width:412px;height:232px;background:#000"></div>
</div>


<!-- ===== PLAYER CONTENT ===== -->
<svg style="left:619.4px;top:85px" width="130.6" height="232" viewBox="0 0 130.6 232">
 <defs>
  <linearGradient id="vbg" x1="0" y1="0" x2="0" y2="1"><stop offset="0" stop-color="#dcdcdc"/><stop offset="0.55" stop-color="#e2e2e2"/><stop offset="1" stop-color="#ebebeb"/></linearGradient>
 </defs>
 <rect width="130.6" height="232" fill="url(#vbg)"/>
 <g transform="translate(-619.4,-85)">
  <!-- arms -->
  <path d="M677 164 Q655 169 631 170" stroke="#dce2ec" stroke-width="5.5" fill="none" stroke-linecap="round"/>
  <path d="M633 167 L628 165.5 L628.5 174 L633 173 Z" fill="#dce2ec"/>
  <path d="M704 166 Q720 183 733 198" stroke="#dce2ec" stroke-width="5.5" fill="none" stroke-linecap="round"/>
  <path d="M730 199 L737 203 L739 197 L734 194 Z" fill="#dce2ec"/>
  <path d="M628 169 L624 166 M628 170.5 L624.5 171" stroke="#c48a78" stroke-width="1.6"/>
  <path d="M738 201 L742 202.5 M737.5 202 L740 205.5" stroke="#c48a78" stroke-width="1.6"/>
  <!-- neck/head -->
  <rect x="686" y="157" width="5" height="6" fill="#c4927c"/>
  <ellipse cx="688.6" cy="152.5" rx="5.3" ry="7" fill="#cc9a84"/>
  <path d="M683 152 Q682 143.5 689 143 Q696 143.5 694.8 152 Q694 147 689 146.8 Q684 147 683 152 Z" fill="#1a1414"/>
  <circle cx="689.5" cy="140.8" r="2.8" fill="#1a1414"/>
  <path d="M686.5 157.5 Q688.5 158.5 690.5 157.5" stroke="#b5484a" stroke-width="0.9" fill="none"/>
  <!-- top -->
  <path d="M673 163 Q688 159 706 164 Q707 176 705 187.5 Q690 190 676 187.5 Q672 176 673 163 Z" fill="#dce2ec"/>
  <path d="M676 187.5 Q690 190 703 187.5 L703 191.5 Q690 194 676.5 191.5 Z" fill="#d9b3a2"/>
  <!-- pants -->
  <path d="M676 191.5 Q690 194 703 191.5 Q708 204 705 220 Q702 236 703 252 L705 275 L698 277 L694 246 Q692 240 693 232 Q691 246 692 272 L684 273 Q684 252 683 236 Q676 214 676 191.5 Z" fill="#dce2ec"/>
  <path d="M693 214 Q692.5 224 693 232" stroke="#c6cdd9" stroke-width="0.8" fill="none"/>
  <ellipse cx="687.5" cy="274" rx="3.6" ry="2.3" fill="#111"/>
  <ellipse cx="702" cy="278.5" rx="3.9" ry="2.7" fill="#111"/>
 </g>
</svg>
<div class="t" style="left:479.5px;top:374.8px;font-size:8.6px;color:#1ec3cf">00:00:01:17</div>
<div class="t" style="left:531px;top:374.8px;font-size:8.6px;color:#555">/</div>
<div class="t" style="left:537.5px;top:374.8px;font-size:9px;color:#e6e6e6">00:00:07:05</div>
<svg style="left:595px;top:372.5px" width="18" height="13" viewBox="0 0 18 13">
 <g fill="#3e3e3e"><rect x="0" y="0" width="7.5" height="2"/><rect x="0" y="3.5" width="7.5" height="2"/><rect x="0" y="7" width="7.5" height="2"/><rect x="0" y="10.5" width="7.5" height="2"/>
 <rect x="9.5" y="0" width="7.5" height="2"/><rect x="9.5" y="3.5" width="7.5" height="2"/><rect x="9.5" y="7" width="7.5" height="2"/><rect x="9.5" y="10.5" width="7.5" height="2"/></g>
</svg>
<div class="a" style="left:681.6px;top:375px;width:2px;height:8.5px;background:#e6e6e6"></div>
<div class="a" style="left:686.4px;top:375px;width:2px;height:8.5px;background:#e6e6e6"></div>
<div class="a" style="left:798px;top:374px;width:15.3px;height:10px;border:1px solid #cfcfcf;border-radius:1.5px"></div>
<div class="t" style="left:798px;top:375.6px;width:15.3px;text-align:center;font-size:7px;color:#d8d8d8;letter-spacing:-0.2px">Full</div>
<svg style="left:822.8px;top:372.3px" width="14" height="14" viewBox="0 0 14 14">
 <path d="M0.6 3.6 V0.6 H3.6 M10.4 0.6 H13.4 V3.6 M13.4 10.4 V13.4 H10.4 M3.6 13.4 H0.6 V10.4" stroke="#dedede" stroke-width="1.2" fill="none"/>
 <circle cx="6.8" cy="6.8" r="2.8" stroke="#dedede" stroke-width="1.2" fill="none"/><path d="M8.8 8.8 L10.4 10.4" stroke="#dedede" stroke-width="1.2"/>
</svg>
<div class="a" style="left:846.3px;top:374px;width:21px;height:10px;border:1px solid #444;border-radius:1.5px"></div>
<div class="t" style="left:846.3px;top:375.6px;width:21px;text-align:center;font-size:7px;color:#4a4a4a">Ratio</div>
<div class="a" style="left:873.5px;top:375px;width:1px;height:8px;background:#2a2a2a"></div>
<svg style="left:879px;top:373px" width="13" height="13" viewBox="879 373 13 13">
 <path d="M880.9 377.4 V374.8 H883.4 M890.3 381.6 V384.2 H887.8 M885.6 379.1 L890 374.9 M887.2 374.8 H890.3 V377.9 M885.4 379.9 L881.1 384.1 M880.9 381 V384.2 H884.1" stroke="#e0e0e0" stroke-width="1.3" fill="none"/>
</svg>
<svg style="left:874px;top:38px" width="10" height="9" viewBox="0 0 10 9"><path d="M0 1 H10 M0 4.5 H10 M0 8 H10" stroke="#5a5a5a" stroke-width="1.1"/></svg>

<!-- ===== DETAILS PANEL ===== -->
<div class="a" id="dp" style="left:902px;top:27px;width:371px;height:369px;background:#262626;border-radius:6px;overflow:hidden">
  <div class="a" style="left:0;top:0;width:371px;height:32px;background:#313131"></div>
  <div class="a" style="left:0;top:32px;width:371px;height:1px;background:#212121"></div>
  <div class="t" style="left:9.2px;top:11px;font-size:9.4px;color:#e6e6e6">Details</div>
  <div class="a" style="left:0;top:341px;width:371px;height:28px;background:#2e2e2e"></div>
</div>


<!-- ===== DETAILS CONTENT ===== -->
<div class="t" style="left:911.2px;top:72.6px;font-size:9px;color:#7c7c7c">Name:</div>
<div class="t" style="left:1018px;top:72.1px;font-size:9.5px;color:#cdcdcd">0803 (2)</div>
<div class="t" style="left:911.2px;top:97.4px;font-size:9px;color:#7c7c7c">Path:</div>
<div class="t" style="left:1018px;top:96.9px;font-size:9.3px;color:#cdcdcd">C:/Users/TOPGUS/AppData/Local/CapCut Drafts/0803 (2)</div>
<div class="t" style="left:911.2px;top:121.6px;font-size:9px;color:#7c7c7c">Aspect ratio:</div>
<div class="t" style="left:1018px;top:121.1px;font-size:9.5px;color:#cdcdcd">Original</div>
<div class="t" style="left:911.2px;top:145.8px;font-size:9px;color:#7c7c7c">Resolution:</div>
<div class="t" style="left:1018px;top:145.3px;font-size:9.5px;color:#cdcdcd">Adapted</div>
<div class="t" style="left:911.2px;top:170.3px;font-size:9px;color:#7c7c7c">Frame rate:</div>
<div class="t" style="left:1018px;top:169.8px;font-size:9.5px;color:#cdcdcd">30.00fps</div>
<div class="t" style="left:911.2px;top:194.8px;font-size:9px;color:#7c7c7c">Imported media:</div>
<div class="t" style="left:1018px;top:194.3px;font-size:9.5px;color:#cdcdcd">Stay in original location</div>
<div class="t" style="left:911.2px;top:231.7px;font-size:9px;color:#7c7c7c">Proxy:</div>
<div class="t" style="left:1018px;top:231.2px;font-size:9.5px;color:#cdcdcd">Turned off</div>
<div class="t" style="left:911.2px;top:256.3px;font-size:9px;color:#7c7c7c">Arrange layers</div>
<div class="t" style="left:1018px;top:255.8px;font-size:9.5px;color:#cdcdcd">Turned on</div>
<div class="a" style="left:911px;top:217.5px;width:362px;height:1px;background:#333"></div>
<svg style="left:938px;top:230.8px" width="9" height="9" viewBox="0 0 9 9"><circle cx="4.3" cy="4.3" r="3.7" stroke="#777" stroke-width="0.9" fill="none"/><path d="M3.1 3.4 Q3.1 2.2 4.3 2.2 Q5.5 2.2 5.5 3.3 Q5.5 4 4.4 4.5 V5.2 M4.4 6.2 V6.7" stroke="#777" stroke-width="0.9" fill="none"/></svg>
<svg style="left:970px;top:255.4px" width="9" height="9" viewBox="0 0 9 9"><circle cx="4.3" cy="4.3" r="3.7" stroke="#777" stroke-width="0.9" fill="none"/><path d="M3.1 3.4 Q3.1 2.2 4.3 2.2 Q5.5 2.2 5.5 3.3 Q5.5 4 4.4 4.5 V5.2 M4.4 6.2 V6.7" stroke="#777" stroke-width="0.9" fill="none"/></svg>
<div class="a" style="left:1209px;top:374.8px;width:55px;height:15.2px;background:#464646;border-radius:3px"></div>
<div class="t" style="left:1209px;top:378.2px;width:55px;text-align:center;font-size:8.9px;font-weight:bold;color:#eee;-webkit-text-stroke:0">Modify</div>

<!-- ===== TIMELINE ===== -->
<div class="a" id="tl" style="left:7px;top:400px;width:1266px;height:356px;background:#262626">
  <div class="a" style="left:0;top:25px;width:1266px;height:1px;background:#1e1e1e"></div>
</div>

<!-- ===== TIMELINE CONTENT ===== -->
<svg style="left:0;top:398px" width="1280" height="40" viewBox="0 398 1280 40">
 <g stroke="#d8d8d8" stroke-width="1.1" fill="none">
  <!-- cursor -->
  <path d="M15.6 408.4 L22.6 411.6 L19.6 412.8 L22 415.6 L20.6 417 L18.2 414.2 L16.2 416.6 Z" stroke-linejoin="round"/>
  <path d="M33.5 412 L36.1 414.4 L38.7 412" stroke-width="1.3"/>
 </g>
 <path d="M50.3 406 V419" stroke="#3a3a3a" stroke-width="1"/>
 <g stroke="#5c5c5c" stroke-width="1.1" fill="none">
  <!-- undo -->
  <path d="M62.5 409.5 L60.6 411.4 L62.5 413.3 M60.8 411.4 H66.5 Q69.6 411.4 69.6 414.4 Q69.6 417.4 66.5 417.4 H62.5"/>
  <!-- redo -->
  <path d="M95.6 409.5 L97.5 411.4 L95.6 413.3 M97.3 411.4 H91.6 Q88.5 411.4 88.5 414.4 Q88.5 417.4 91.6 417.4 H95.6"/>
  <!-- split -->
  <path d="M116.5 408 H118.8 V418 H116.5 M124.6 408 H122.3 V418 H124.6"/>
  <!-- split left -->
  <path d="M143.5 408 H145.8 V418 H143.5 M151.8 408 H149.5 V418 H151.8" stroke-dasharray="1.6 1.2"/>
  <path d="M149.5 408 V418" />
  <!-- split right -->
  <path d="M171 408 H173.3 V418 H171" />
  <path d="M179.5 408 H177.2 V418 H179.5" stroke-dasharray="1.6 1.2"/>
  <!-- delete -->
  <path d="M198 409.8 H207.4 M200.8 409.8 V408.2 H204.6 V409.8 M199.2 409.8 L199.9 417.8 H205.5 L206.2 409.8 M201.8 412 V416 M203.6 412 V416"/>
  <!-- marker -->
  <path d="M226.4 408.2 H234 V414.8 L230.2 418 L226.4 414.8 Z" stroke-linejoin="round"/>
 </g>
 <g fill="#5c5c5c">
  <path d="M252.2 410 H258.5 L259.8 411.4 H263.5 V418.3 H252.2 Z M254 414 V415.2 H261.5 V414 Z"/>
  <path d="M261.7 406.8 V410.4 M259.9 408.6 H263.5" stroke="#5c5c5c" stroke-width="1"/>
 </g>
 <!-- right side -->
 <g stroke="#d8d8d8" stroke-width="1.1" fill="none">
  <rect x="943.4" y="407.2" width="4" height="6.6" rx="2"/>
  <path d="M941.5 411.6 Q941.5 416 945.4 416 Q949.3 416 949.3 411.6 M945.4 416 V418.6"/>
 </g>
 <path d="M964.3 401 V414" stroke="#3a3a3a" stroke-width="1"/>
 <rect x="974" y="404" width="17.7" height="17.6" rx="2" fill="#1b1b1b"/>
 <rect x="1001.4" y="404" width="17.6" height="17.6" rx="2" fill="#1b1b1b"/>
 <rect x="1028.5" y="404" width="28.3" height="17.6" rx="2" fill="#1b1b1b"/>
 <rect x="1047.8" y="404" width="9" height="17.6" fill="#151515"/>
 <g fill="#14c9da">
  <rect x="975.8" y="410" width="4.8" height="6" rx="1"/>
  <path d="M985 410 H989 Q990 410 990 411 V415 Q990 416 989 416 H985 Z M986.3 411.5 V414.5 H988.6 V411.5 Z" fill-rule="evenodd"/>
  <path d="M980.6 413 H984.5" stroke="#14c9da" stroke-width="1"/>
  <rect x="1003.5" y="409.5" width="13.4" height="7" rx="1.3"/>
  <path d="M1010.2 404.8 V407.6 M1010.2 418.4 V421.2 M1005.5 406 L1006.8 408 M1014.9 406 L1013.6 408 M1005.5 420 L1006.8 418 M1014.9 420 L1013.6 418" stroke="#14c9da" stroke-width="0.9"/>
  <path d="M1030.5 410 H1036.5 V411.6 H1032 V414.4 H1036.5 V416 H1030.5 Z M1038.5 410 H1044.5 V416 H1038.5 V414.4 H1043 V411.6 H1038.5 Z"/>
  <path d="M1034.5 413 H1040.5" stroke="#14c9da" stroke-width="1.1"/>
 </g>
 <rect x="1010" y="411.6" width="0.9" height="3" fill="#1b1b1b"/>
 <path d="M1049.9 412 L1052.3 414.3 L1054.7 412" stroke="#e8e8e8" stroke-width="1.3" fill="none"/>
 <g stroke="#d0d0d0" stroke-width="1.1" fill="none">
  <path d="M1073 409.5 H1069.4 V416.6 H1073 M1075.8 406.5 V419.6 M1078.5 409.5 H1082.4 V413"/>
  <path d="M1089 412 L1091.4 414.3 L1093.8 412" stroke-width="1.3"/>
 </g>
 <path d="M1078.5 412.5 L1082.8 414.2 L1080.9 415 L1082.3 417.2 L1081.4 418 L1080 415.8 L1078.8 417.3 Z" fill="#d0d0d0"/>
 <path d="M1105.3 401 V414" stroke="#3a3a3a" stroke-width="1"/>
 <g stroke="#d8d8d8" stroke-width="1.1" fill="none">
  <path d="M1119.5 409 H1117.6 V414.3 H1120 M1128.2 409 H1130.3 V414.3 H1127.8 M1121.4 409 V410.8 M1124 409 V410.3 M1126.5 409 V410.8"/>
  <circle cx="1123.6" cy="415" r="2"/><path d="M1125 416.4 L1126.5 417.9"/>
  <circle cx="1151.2" cy="412.6" r="4.9"/><path d="M1149 412.6 H1153.4 M1154.7 416.1 L1156.6 418"/>
  <circle cx="1260.8" cy="412.6" r="4.9"/><path d="M1258.6 412.6 H1263 M1260.8 410.4 V414.8 M1264.3 416.1 L1266.2 418"/>
 </g>
 <rect x="1169.8" y="408" width="6" height="9.5" rx="2.2" fill="#555"/>
 <path d="M1175.8 412.6 H1242.8" stroke="#0b0b0b" stroke-width="1.2"/>
 <!-- playhead -->
 <path d="M101 425.6 H108 V432.2 L104.5 435.6 L101 432.2 Z" fill="none" stroke="#8a8a8a" stroke-width="1"/>
</svg>
<div class="a" style="left:104px;top:435.5px;width:1px;height:308px;background:#434343"></div>
<div class="a" style="left:27px;top:445px;width:1px;height:311px;background:#1f1f1f"></div>
<!-- dropzone -->
<svg style="left:105px;top:570px" width="1162" height="55" viewBox="0 0 1162 55">
 <path d="M0.5 1.2 H1154.5 Q1158.5 1.2 1158.5 5.2 V49.6 Q1158.5 53.6 1154.5 53.6 H0.5" fill="#2a2a2a" stroke="#3d3d3d" stroke-width="1" stroke-dasharray="1 2.5"/>
</svg>
<svg style="left:122.7px;top:592.9px" width="12.2" height="10.2" viewBox="0 0 12.2 10.2">
 <rect x="0" y="0" width="12.2" height="10.2" rx="1.6" fill="#a5a5a5"/>
 <rect x="2.2" y="2" width="7.8" height="2.4" fill="#2a2a2a"/><rect x="2.2" y="5.8" width="7.8" height="2.4" fill="#2a2a2a"/>
</svg>
<div class="t" style="left:147px;top:592.5px;font-size:9.4px;color:#d0d0d0">Drag material here and start to create</div>
<!-- scrollbar -->
<div class="a" style="left:30px;top:750px;width:1237px;height:4.5px;background:#3b3b3b;border-radius:2.5px"></div>

</body></html>
